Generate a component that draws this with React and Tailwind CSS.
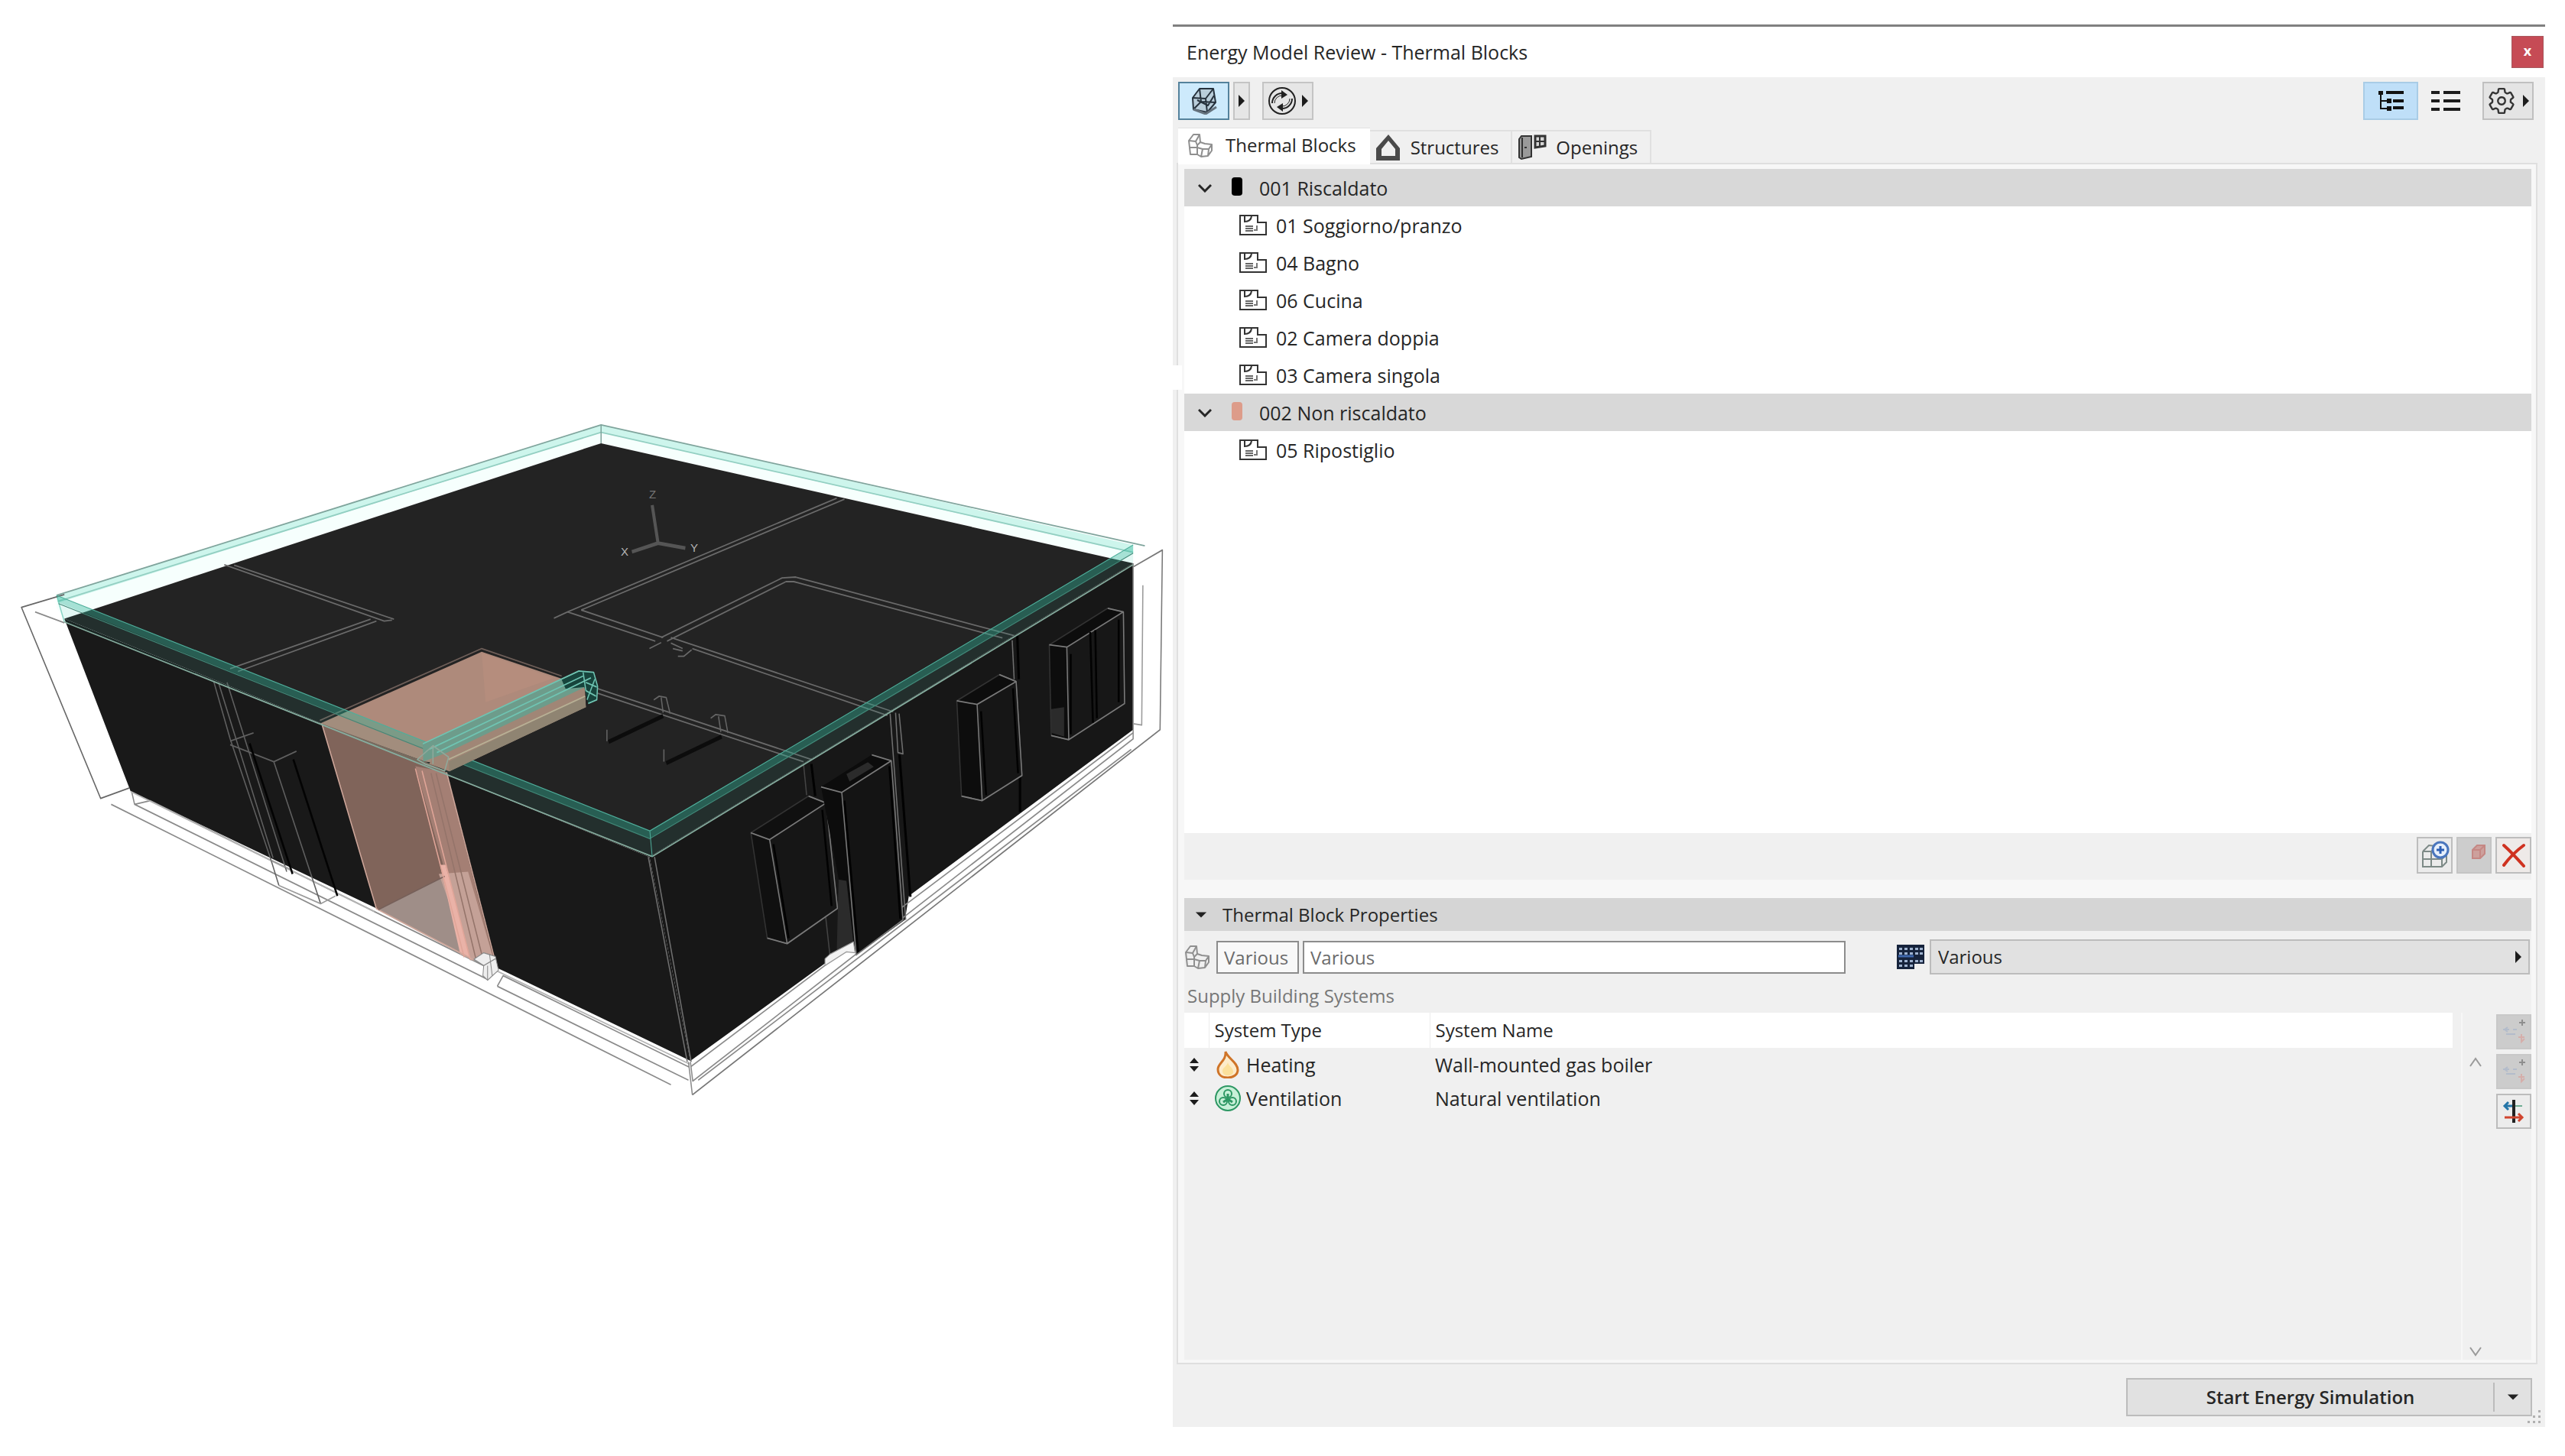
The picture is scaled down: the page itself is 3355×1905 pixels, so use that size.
import React, { useState } from 'react';
import { IoSettingsOutline } from 'react-icons/io5';

const blocks = [
  {
    id: '001',
    name: '001 Riscaldato',
    color: '#000000',
    zones: ['01 Soggiorno/pranzo', '04 Bagno', '06 Cucina', '02 Camera doppia', '03 Camera singola']
  },
  {
    id: '002',
    name: '002 Non riscaldato',
    color: '#dd9c8a',
    zones: ['05 Ripostiglio']
  }
];

const systems = [
  { type: 'Heating', name: 'Wall-mounted gas boiler' },
  { type: 'Ventilation', name: 'Natural ventilation' }
];

const ArrowRight = () => (
  <svg viewBox="0 0 10 18" className="w-[10px] h-[18px]" aria-hidden="true">
    <path d="M1 1 L9 9 L1 17Z" fill="#1c1c1c" />
  </svg>
);

const ArrowDown = () => (
  <svg viewBox="0 0 18 10" className="w-4 h-[10px]" aria-hidden="true">
    <path d="M1 1 H17 L9 9Z" fill="#222" />
  </svg>
);

const BlocksIcon = () => (
  <svg viewBox="0 0 34 34" className="w-[34px] h-[34px] shrink-0" fill="none" stroke="#8f8f8f" strokeWidth="2" strokeLinejoin="round" aria-hidden="true">
    <path d="M2 11 L8 3 H16 L17 13 L13 17 V29 L4 29 Z" />
    <path d="M2 11 L11 12 L16 3 M11 12 L13 17 M3 20 H13" />
    <path d="M17 13 L23 15 L32 16 V24 L27 31 L18 32 L13 29 M13 20 L20 22 H28 L32 16 M20 22 L18 32 M28 22 L27 31" />
  </svg>
);

const ModelIcon = () => (
  <svg viewBox="0 0 36 36" className="w-9 h-9" fill="none" stroke="#26313c" strokeWidth="2" strokeLinejoin="round" aria-hidden="true">
    <path d="M3 14 L12 2 H30 L33 20 L22 33 L4 29 Z" fill="#b9cdda" />
    <path d="M3 14 L20 15 L30 2 M20 15 L22 33 M12 2 L14 19 L4 29 M14 19 L33 20 M9 17 L23 24 L31 11" />
    <path d="M4 29 L20 35 L34 26" stroke="#65727d" strokeWidth="3" />
  </svg>
);

const RefreshIcon = () => (
  <svg viewBox="0 0 38 38" className="w-[38px] h-[38px]" fill="none" stroke="#222" strokeWidth="2" aria-hidden="true">
    <circle cx="19" cy="19" r="17" />
    <path d="M6 22 A13 13 0 0 1 20 9 M32 16 A13 13 0 0 1 18 29" />
    <path d="M9 22 A10 10 0 0 1 20 12 M29 16 A10 10 0 0 1 18 26" strokeWidth="1" />
    <path d="M18 5 L26 11 L18 16Z M20 22 L12 27 L20 33Z" fill="#222" stroke="none" />
  </svg>
);

const TreeIcon = () => (
  <svg viewBox="0 0 36 30" className="w-9 h-[30px]" aria-hidden="true">
    <path d="M5 4 V25 H15 M5 15 H15" fill="none" stroke="#111" strokeWidth="2" />
    <path d="M2 2 h6 v5 h-6z M12 2 h23 v4 h-23z M13 12 h6 v6 h-6z M21 13 h14 v4 h-14z M13 22 h6 v6 h-6z M21 22 h14 v4 h-14z" fill="#111" />
  </svg>
);

const ListIcon = () => (
  <svg viewBox="0 0 40 30" className="w-10 h-[30px]" aria-hidden="true">
    <path d="M1 2h11v4H1z M17 2h22v4H17z M1 13h11v4H1z M17 13h22v4H17z M1 24h11v4H1z M17 24h22v4H17z" fill="#1c1c1c" />
  </svg>
);

const HouseIcon = () => (
  <svg viewBox="0 0 34 36" className="w-[34px] h-9" aria-hidden="true">
    <path fillRule="evenodd" d="M17 1 L32 19 V35 H1 V19 Z M17 9 L8 20 V29 H26 V20 Z" fill="#4a4a4a" />
  </svg>
);

const OpeningsIcon = () => (
  <svg viewBox="0 0 38 34" className="w-[38px] h-[34px]" fill="none" stroke="#333" strokeWidth="2" aria-hidden="true">
    <path d="M2 6 L5 2 H18 V29 L5 32 L2 30Z" fill="#9a9a9a" />
    <path d="M6 4 V30 M9 17 H12" />
    <path d="M23 2 H36 V15 L23 17Z" fill="#d5d5d5" strokeWidth="3" />
    <path d="M29 2 V17 M23 9 H36" strokeWidth="2" />
  </svg>
);

const ZoneIcon = () => (
  <svg viewBox="0 0 38 28" className="w-[38px] h-7 shrink-0" fill="none" stroke="#333" strokeWidth="2" aria-hidden="true">
    <path d="M2 1 H25 V10 H36 V26 H2 Z" />
    <path d="M8 2 V9 Q16 9 17 2" />
    <path d="M24 14 V20 H20" stroke="#777" />
    <path d="M9 15 H19 M9 18 H19 M9 21 H19" stroke="#666" />
  </svg>
);

const SortIcon = () => (
  <svg viewBox="0 0 12 18" className="w-3 h-[18px]" aria-hidden="true">
    <path d="M0 7 L6 0 L12 7Z M0 11 L6 18 L12 11Z" fill="#1c1c1c" />
  </svg>
);

const FlameIcon = () => (
  <svg viewBox="0 0 32 36" className="w-8 h-9" fill="none" aria-hidden="true">
    <path d="M13 1 C16 10 29 15 29 25 C29 31 23 35 16 35 C8 35 3 31 3 24 C3 16 14 13 13 1Z" fill="#fdeccb" stroke="#cf7428" strokeWidth="3" />
    <path d="M16 15 C17 20 23 22 23 27 C23 31 20 32 16 32 C12 32 9 30 9 26 C9 22 15 20 16 15Z" fill="#fbe09b" />
  </svg>
);

const FanIcon = () => (
  <svg viewBox="0 0 36 36" className="w-9 h-9" fill="none" stroke="#2d9763" strokeWidth="2" aria-hidden="true">
    <circle cx="18" cy="18" r="16" fill="#c8f0d8" />
    <circle cx="18" cy="12" r="5" />
    <circle cx="12" cy="22" r="5" />
    <circle cx="24" cy="22" r="5" />
    <path d="M18 12 V19 L12 23 M18 19 L24 23" strokeWidth="3" />
  </svg>
);

const ProfileIcon = () => (
  <svg viewBox="0 0 36 32" className="w-9 h-8 shrink-0" aria-hidden="true">
    <path d="M0 0 H36 V25 H23 V32 H0Z" fill="#16233c" />
    <path d="M3 4h4v3H3z M10 4h4v3h-4z M17 4h4v3h-4z M24 4h4v3h-4z M30 4h4v3h-4z M3 10h4v3H3z M10 10h4v3h-4z M17 10h4v3h-4z M24 10h4v3h-4z M30 10h4v3h-4z M3 20h4v3H3z M10 20h4v3h-4z M17 20h4v3h-4z M24 20h4v3h-4z M30 20h4v3h-4z M3 26h4v3H3z M10 26h4v3h-4z M17 26h4v3h-4z" fill="#9fb3d0" />
    <path d="M2 15 H22" stroke="#3f68ad" strokeWidth="3" />
  </svg>
);

const AddBlockIcon = () => (
  <svg viewBox="0 0 38 38" className="w-[38px] h-[38px]" fill="none" stroke="#7d8a87" strokeWidth="2" aria-hidden="true">
    <path d="M3 14 L11 6 L20 7 M3 14 V34 H14 V14 H3 M3 24 H20 M14 14 L20 9 M14 34 H28 L34 28 V18 M14 24 H28 V34 M28 24 L34 18" />
    <circle cx="26" cy="12" r="10" fill="#e6effb" stroke="#4a76bd" strokeWidth="3" />
    <path d="M26 7 V17 M21 12 H31" stroke="#2d5fb4" strokeWidth="3" />
  </svg>
);

const RedBlockIcon = () => (
  <svg viewBox="0 0 20 20" className="w-5 h-5 ml-3 mb-2" fill="#cda09c" stroke="#c58884" strokeWidth="2" aria-hidden="true">
    <path d="M2 7 L8 1 H18 V12 L12 18 H2Z" />
    <path d="M2 7 H12 L18 1 M12 7 V18" fill="none" />
  </svg>
);

const DeleteIcon = () => (
  <svg viewBox="0 0 32 32" className="w-8 h-8" fill="none" aria-hidden="true">
    <path d="M3 3 Q14 13 29 30 M29 3 Q14 14 3 29" stroke="#cf3220" strokeWidth="4" strokeLinecap="round" />
  </svg>
);

const SystemFadedIcon = () => (
  <svg viewBox="0 0 36 36" className="w-9 h-9" fill="none" strokeWidth="2" aria-hidden="true">
    <path d="M29 2 V10 M25 6 H33" stroke="#8e8e8e" />
    <path d="M4 15 H12 M17 15 H22 M6 15 l4 -3 M6 15 l4 3 M8 21 H20" stroke="#b3bccb" />
    <path d="M24 25 H32 M28 21 V31 l4 -4" stroke="#d5aeaa" />
  </svg>
);

const SystemIcon = () => (
  <svg viewBox="0 0 36 36" className="w-9 h-9" fill="none" aria-hidden="true">
    <path d="M16 3 H20 V33 H16Z" fill="#222" />
    <path d="M6 11 H16 M11 6 L6 11 L11 16" stroke="#2676a8" strokeWidth="3" />
    <path d="M20 11 H29" stroke="#6fae93" strokeWidth="2" />
    <path d="M6 26 H28 M24 21 L29 26 L24 31" stroke="#d0452f" strokeWidth="3" />
  </svg>
);

// Perspective view of the thermal blocks with the slab outline above them
const ModelView = () => (
  <svg viewBox="0 0 1534 1905" className="w-full h-auto block" role="img" aria-label="3D view of the thermal blocks">
    <g transform="translate(0 520) scale(0.5102 0.5995)" fill="none" strokeLinejoin="round">
      {/* back of the slab */}
      <path d="M145 432 L1541 60 L2905 322 V362 L1541 100 L165 483 L145 460Z" fill="#f6fffd" />
      <path d="M145 432 L1541 60 L2905 322 V340 L1541 76 L150 448Z" fill="#cdf5ec" />
      <g stroke="#93cfc2" strokeWidth="3">
        <path d="M145 432 L1541 60 L2935 324" stroke="#7fa49c" />
        <path d="M148 445 L1541 76 L2905 338" />
        <path d="M1541 60 V100" stroke="#7fa49c" />
        <path d="M145 432 L165 490" stroke="#8fd8c8" />
      </g>

      {/* roof and walls */}
      <path d="M165 483 L1541 100 L2905 362 L1665 1003Z" fill="#232323" />
      <path d="M165 483 L1665 1003 L1770 1448 L1275 1245 L958 1112 L335 860Z" fill="#191919" />
      <path d="M1665 1003 L2905 362 V725 L2330 1088 L2320 1140 L2195 1217 L2188 1190 L2115 1235 L1770 1448Z" fill="#171717" />

      {/* wireframe around the base */}
      <g stroke="#8a8a8a" strokeWidth="3">
        <path d="M165 430 L55 458 L258 875 L332 852" stroke="#666" />
        <path d="M90 468 L165 492 M285 888 L1000 1192 L1720 1500" />
        <path d="M338 862 L345 888 L1250 1270 M345 888 L385 880 L1240 1240 M1275 1285 L1765 1490" />
        <path d="M335 860 L960 1122 M1275 1252 L1768 1455" stroke="#b5b5b5" />
        <path d="M1275 1285 L1290 1262 L1768 1462 M1765 1450 L1775 1522" />
        <path d="M1775 1522 L2974 725 L2980 333 L2905 370" stroke="#777" />
        <path d="M1770 1450 L1776 1492 L2905 745 V725 M1790 1490 L2900 768" />
        <path d="M1772 1460 L2905 732 M2905 362 V725" />
        <path d="M2930 410 L2927 715 L2905 712" stroke="#999" />
      </g>

      {/* partitions drawn on the roof */}
      <g stroke="#6a6a6a" strokeWidth="3">
        <path d="M575 365 L985 488 L1005 486 M600 366 L1010 484 M950 484 L590 592 M965 488 L610 598" />
        <path d="M2145 220 L1455 468 L1420 482 M2165 222 L1490 464" />
        <path d="M1490 464 L1700 524 M1455 468 L1680 532 M1720 524 L2290 686 M1720 536 L1750 548 M1775 548 L2275 694" />
        <path d="M1695 524 L2005 394 L2040 392 L2600 520 M1710 532 L2015 402 H2035 L2570 525 M1665 548 L1695 535" />
        <path d="M1725 548 l25 5 M1738 565 h15 l20 -14" />
        <path d="M1530 635 L2080 790 M1530 645 L2060 795" />
      </g>
      <g stroke="#666" strokeWidth="3">
        <path d="M1676 660 L1690 652 L1708 655 L1718 690 M1695 655 L1700 688" />
        <path d="M1822 700 L1835 692 L1858 695 L1866 732 M1842 696 L1848 730" />
        <path d="M1556 725 V750 M1702 768 V795" />
      </g>
      <g stroke="#0c0c0c" strokeWidth="9">
        <path d="M1560 752 L1700 695 M1708 798 L1850 740" />
      </g>
      <path d="M1672 235 L1687 318 M1687 318 L1620 337 M1687 318 L1757 329" stroke="#555" strokeWidth="8" />

      {/* left wall door */}
      <g stroke="#606060" strokeWidth="3">
        <path d="M548 620 L590 745 L695 1010 L715 1065 M560 622 L700 1005 M582 622 L735 1035" />
        <path d="M590 750 L650 732 M590 758 L702 795 L760 772 M702 795 L822 1105" />
        <path d="M715 1065 L822 1105 L860 1088 M695 1010 L745 1030" stroke="#9a9a9a" />
      </g>
      <path d="M752 790 L865 1088 M640 755 L750 1040" stroke="#030303" strokeWidth="5" />

      {/* corner and right wall joints */}
      <g stroke="#6f6f6f" strokeWidth="3">
        <path d="M1662 1003 L1762 1450 M1678 1003 L1772 1450" />
        <path d="M2282 690 L2322 1140 M2296 688 L2302 775 L2315 778 L2305 690" />
        <path d="M2060 800 L2068 868 M2115 1120 L2128 1220" stroke="#444" />
        <path d="M2595 530 L2600 615" />
      </g>
      <path d="M2608 520 L2612 615 M2615 800 V905 M2080 800 L2090 870 M2306 780 L2334 1090" stroke="#020202" strokeWidth="6" />

      {/* windows */}
      <g stroke="#7a7a7a" strokeWidth="3">
        <path d="M1925 950 L2073 870 L2118 885 L2147 1115 L2018 1192 L1967 1180Z" fill="#101010" stroke="#333" />
        <path d="M1973 965 L2118 885 L2147 1115 L2018 1192Z M1925 950 L1973 965 M2018 1192 L1967 1180 M2073 870 L2118 885" fill="#161616" />
        <path d="M2105 850 L2235 780 L2285 793 L2158 862 L2195 1217 L2188 1190 L2150 1050Z" fill="#0c0c0c" stroke="none" />
        <path d="M2170 822 L2225 796 L2240 806 L2178 838Z" fill="#2b2b2b" stroke="none" />
        <path d="M2158 862 L2285 793 L2315 1140 L2195 1217Z" fill="#141414" />
        <path d="M2105 850 L2158 862 M2235 780 L2285 793" />
        <path d="M2453 662 L2562 605 L2605 620 L2620 825 L2518 880 L2465 870Z" fill="#0d0d0d" stroke="#333" />
        <path d="M2505 670 L2605 620 L2620 825 L2518 880Z M2453 662 L2505 670 M2518 880 L2465 870 M2562 605 L2605 620" fill="#161616" />
        <path d="M2690 540 L2840 460 L2880 468 L2883 668 L2740 747 L2695 738Z" fill="#0d0d0d" stroke="#333" />
        <path d="M2695 680 L2728 676 V740 L2695 732Z" fill="#2b2b2b" stroke="none" />
        <path d="M2735 545 L2880 468 L2883 668 L2740 747Z M2690 540 L2735 545 M2740 747 L2695 738 M2840 460 L2880 468" fill="#171717" />
      </g>
      <path d="M2795 512 L2802 710 M2808 508 L2812 700 M1983 975 L2022 1180 M2108 900 L2132 1110 M2745 560 V735 M2868 485 V665 M2515 685 L2528 868 M2597 635 L2610 820 M2165 880 L2200 1210 M2280 805 L2308 1138" stroke="#020202" strokeWidth="5" />
      <path d="M2150 1052 L2170 1055 L2188 1190 L2145 1215Z" fill="#2b2b2b" />
      <path d="M2115 1225 L2128 1215 L2188 1188 L2192 1212 L2170 1210 L2115 1240Z" fill="#f2f2f2" stroke="#999" strokeWidth="2" />

      {/* unheated block */}
      <path d="M820 712 L1235 555 L1440 614 L1500 640 L1140 800 L1090 795Z" fill="#ae8a7b" />
      <path d="M1235 558 L1245 665 L1420 612Z" fill="#b58d7d" />
      <path d="M825 712 L1090 795 L1140 815 L1268 1228 L1215 1228 L965 1116Z" fill="#80645a" />
      <path d="M970 1118 L1140 1045 L1215 1228Z" fill="#9f8e88" />
      <path d="M1065 805 L1145 818 L1265 1225 L1205 1228Z" fill="#a47f74" />
      <path d="M1125 1040 L1200 1035 L1265 1225 L1205 1228Z" fill="#c4a197" />
      <path d="M1128 1020 L1142 1020 L1206 1225 L1180 1215Z" fill="#eab2a7" />
      <path d="M820 705 L1235 548 L1440 608" stroke="#6f5f59" strokeWidth="3" />
      <path d="M825 712 L965 1116 L1215 1228" stroke="#cfa79b" strokeWidth="3" />
      <path d="M970 1118 L1140 1045" stroke="#76605a" strokeWidth="3" />
      <path d="M1065 810 L1190 1222 M1082 815 L1205 1225" stroke="#e0a598" strokeWidth="3" />
      <path d="M1105 820 L1220 1225 M1118 820 L1238 1225" stroke="#94746a" strokeWidth="3" />
      <path d="M1145 818 L1268 1225" stroke="#cfa79b" strokeWidth="3" />
      <path d="M1215 1226 L1240 1212 L1270 1220 L1278 1250 L1250 1272 L1238 1262 L1240 1240Z" fill="#eeeeee" stroke="#888" strokeWidth="2" />
      <path d="M1240 1240 L1270 1225 M1250 1272 V1240 M1255 1215 L1262 1262" stroke="#888" strokeWidth="2" />

      {/* front of the slab */}
      <path d="M145 432 L1666 946 L2905 322 L2905 362 L1672 1002 L165 490Z" fill="#2ab097" fillOpacity="0.09" />
      <path d="M145 432 L1666 946 L2905 322 L2905 340 L1666 963 L150 448Z" fill="#35b79b" fillOpacity="0.35" />
      <g stroke="#4fae9b" strokeWidth="2">
        <path d="M145 432 L1666 946 L2905 322" />
        <path d="M150 450 L1666 963 L2905 340" stroke="#418878" />
        <path d="M165 490 L1672 1002 L2905 365" stroke="#86ad9f" strokeWidth="3" />
        <path d="M1666 946 L1672 1002" />
      </g>

      {/* beam over the unheated block */}
      <path d="M1110 785 L1499 629 L1502 676 L1152 816 L1100 800Z" fill="#a08676" />
      <path d="M1150 795 L1500 652 L1502 676 L1152 816Z" fill="#8f8472" />
      <path d="M1084 756 L1484 597 L1522 600 L1530 622 L1500 632 L1147 775 L1085 795Z" fill="#6d9c8b" />
      <path d="M1440 616 L1490 596 L1522 600 L1532 630 L1530 660 L1508 668 L1498 632 L1450 636Z" fill="#17443c" />
      <g stroke="#6fc4b2" strokeWidth="3">
        <path d="M1084 756 L1484 597 L1522 600 L1532 630 L1530 660 L1508 668" />
        <path d="M1100 768 L1495 608 M1120 775 L1515 612" />
        <path d="M1150 790 L1500 652" stroke="#b7b095" />
        <path d="M1495 600 L1502 640 L1528 652 M1502 622 L1530 632 M1505 660 L1525 615" />
        <path d="M1070 790 L1110 760 L1150 785 L1140 815 L1090 800Z M1110 760 V800" stroke="#8fa99b" />
      </g>
    </g>
    <g fill="#b5b5b5" fontSize="15" fontFamily="Liberation Sans, sans-serif">
      <text x="812" y="727">X</text>
      <text x="903" y="722">Y</text>
      <text x="849" y="652" fill="#777">Z</text>
    </g>
  </svg>
);

const IconButton = ({ label, className, children, ...rest }) => (
  <button
    type="button"
    aria-label={label}
    className={'flex items-center justify-center shrink-0 border-2 ' + className}
    {...rest}
  >
    {children}
  </button>
);

const App = () => {
  const [tab, setTab] = useState('blocks'); // 'blocks', 'structures' or 'openings'
  const [open, setOpen] = useState({ '001': true, '002': true });

  const tabs = [
    { id: 'blocks', label: 'Thermal Blocks', icon: <BlocksIcon /> },
    { id: 'structures', label: 'Structures', icon: <HouseIcon /> },
    { id: 'openings', label: 'Openings', icon: <OpeningsIcon /> }
  ];

  return (
    <div className="grid grid-cols-[1534fr_1795fr] items-stretch min-h-screen bg-white pr-[26px] font-['Open_Sans','Noto_Sans',sans-serif] text-[24px] leading-8 font-medium text-[#262626]">
      <main className="min-w-0">
        <ModelView />
      </main>

      <section className="relative min-w-0 flex flex-col mt-8 mb-[38px] border-t-3 border-[#808080] bg-[#f0f0f0]">
        <header className="flex items-center justify-between h-[66px] pl-[18px] pr-[2px] bg-white">
          <h1 className="text-[25px]">Energy Model Review - Thermal Blocks</h1>
          <button type="button" aria-label="Close" className="w-[42px] h-[42px] pb-1 bg-[#c64b55] border border-[#a8575c] text-white text-[18px] leading-6 font-bold">x</button>
        </header>

        <div className="flex items-center px-[7px] pt-[6px] pb-[10px]">
          <IconButton label="Show model" className="w-[67px] h-[50px] bg-[#cdeafc] border-[#54829c]"><ModelIcon /></IconButton>
          <IconButton label="Model options" className="w-[22px] h-[50px] ml-[5px] bg-[#e6e6e6] border-[#c4c4c4]"><ArrowRight /></IconButton>
          <IconButton label="Update" className="w-[67px] h-[50px] ml-4 gap-[6px] bg-[#e6e6e6] border-[#c4c4c4]"><RefreshIcon /><ArrowRight /></IconButton>
          <IconButton label="Tree view" className="w-[72px] h-[50px] ml-auto bg-[#bfdff8] border-[#a9cce6]"><TreeIcon /></IconButton>
          <IconButton label="List view" className="w-[72px] h-[50px] border-transparent"><ListIcon /></IconButton>
          <IconButton label="Settings" className="w-[67px] h-[50px] ml-3 mr-2 gap-2 bg-[#e4e4e4] border-[#c0c0c0]">
            <IoSettingsOutline className="w-[38px] h-[38px] shrink-0 text-[#333]" />
            <ArrowRight />
          </IconButton>
        </div>

        <div role="tablist" className="flex items-end h-[46px] px-[7px]">
          {tabs.map(t => (
            <button
              key={t.id}
              type="button"
              role="tab"
              aria-selected={tab === t.id}
              onClick={() => setTab(t.id)}
              className={tab === t.id
                ? 'relative z-10 flex items-center gap-4 h-12 -mb-[2px] pl-3 pr-[18px] pb-1 bg-white border-t border-[#e2e2e2]'
                : 'flex items-center gap-3 h-[43px] px-[7px] pr-4 border-t-2 border-r-2 border-[#e0e0e0]'}
            >
              {t.icon}
              <span>{t.label}</span>
            </button>
          ))}
        </div>

        <div className="flex-1 flex flex-col ml-[5px] mr-[10px] border-2 border-[#dfdfdf] bg-[#f7f7f7] pl-2 pr-[6px] pt-[6px] pb-1">
          <ul className="min-h-[869px] bg-white text-[25px]">
            {blocks.map(block => (
              <li key={block.id}>
                <button
                  type="button"
                  aria-expanded={open[block.id]}
                  onClick={() => setOpen({ ...open, [block.id]: !open[block.id] })}
                  className="flex items-center w-full h-[49px] pl-[18px] bg-[#d8d8d8] text-left"
                >
                  <svg viewBox="0 0 18 12" className="w-[18px] h-3" fill="none" stroke="#262626" strokeWidth="3" aria-hidden="true">
                    <path d="M1 2 L9 10 L17 2" />
                  </svg>
                  <span className="w-[14px] h-6 ml-[26px] mb-1 rounded-[4px]" style={{ background: block.color }} />
                  <span className="ml-[22px]">{block.name}</span>
                </button>
                {open[block.id] && (
                  <ul>
                    {block.zones.map(zone => (
                      <li key={zone} className="flex items-center h-[49px] pl-[71px] gap-[11px]">
                        <ZoneIcon />
                        <span>{zone}</span>
                      </li>
                    ))}
                  </ul>
                )}
              </li>
            ))}
          </ul>

          <div className="flex justify-end items-start gap-[5px] h-[61px] pt-[5px] bg-[#f0f0f0]">
            <IconButton label="Add thermal block" className="w-[47px] h-12 bg-[#ebebeb] border-[#bdbdbd]"><AddBlockIcon /></IconButton>
            <IconButton label="Remove zone" className="w-[46px] h-12 bg-[#cdcdcd] border-[#c4c4c4]" disabled><RedBlockIcon /></IconButton>
            <IconButton label="Delete thermal block" className="w-[47px] h-12 bg-[#eeeae8] border-[#bdbdbd]"><DeleteIcon /></IconButton>
          </div>

          <h2 className="mt-6">
            <button type="button" className="flex items-center gap-5 w-full h-[43px] pl-[14px] bg-[#d5d5d5] text-left">
              <ArrowDown />
              <span>Thermal Block Properties</span>
            </button>
          </h2>

          <div className="flex-1 flex flex-col bg-[#f0f0f0]">
            <div className="flex items-center h-[46px] mt-[11px]">
              <BlocksIcon />
              <input aria-label="Block ID" defaultValue="Various" className="w-[108px] h-[43px] ml-2 pl-2 bg-[#f8f8f8] border-2 border-[#8c8c8c] text-[#6b6b6b]" />
              <input aria-label="Block name" defaultValue="Various" className="flex-1 min-w-0 h-[43px] ml-[5px] pl-2 bg-white border-2 border-[#8c8c8c] text-[#6b6b6b]" />
              <div className="flex items-center shrink-0 w-[47%] ml-[67px] mr-[2px] gap-[7px]">
                <ProfileIcon />
                <div className="relative flex-1">
                  <select aria-label="Operation profile" className="appearance-none w-full h-[46px] pl-[9px] bg-[#e1e1e1] border-2 border-[#bcbcbc]">
                    <option>Various</option>
                  </select>
                  <span className="absolute right-[10px] top-[14px] pointer-events-none"><ArrowRight /></span>
                </div>
              </div>
            </div>

            <h3 className="h-[50px] pt-3 pl-1 text-[#777]">Supply Building Systems</h3>

            <div className="flex-1 flex">
              <div className="flex-1">
                <table className="w-full table-fixed text-left">
                  <thead>
                    <tr className="h-[46px] bg-white">
                      <th className="w-8" aria-label="Order" />
                      <th className="w-[289px] pl-[7px] font-medium border-l border-[#ececec]">System Type</th>
                      <th className="pl-[7px] font-medium border-l border-[#ececec]">System Name</th>
                    </tr>
                  </thead>
                  <tbody className="text-[25px]">
                    {systems.map(system => (
                      <tr key={system.type} className="h-11">
                        <td className="pl-[7px]"><SortIcon /></td>
                        <td className="pl-[7px]">
                          <div className="flex items-center gap-[6px]">
                            <span className="w-9 flex justify-center">
                              {system.type === 'Heating' ? <FlameIcon /> : <FanIcon />}
                            </span>
                            {system.type}
                          </div>
                        </td>
                        <td className="pl-[7px]">{system.name}</td>
                      </tr>
                    ))}
                  </tbody>
                </table>
              </div>
              <div className="flex flex-col justify-between items-center w-[36px] ml-[11px] pt-[58px] pb-1 border-l-2 border-[#f7f7f7]">
                <svg viewBox="0 0 18 14" className="w-[18px] h-[14px]" fill="none" stroke="#9a9a9a" strokeWidth="2" aria-hidden="true">
                  <path d="M2 12 L9 2 L16 12" />
                </svg>
                <svg viewBox="0 0 18 14" className="w-[18px] h-[14px]" fill="none" stroke="#9a9a9a" strokeWidth="2" aria-hidden="true">
                  <path d="M2 2 L9 12 L16 2" />
                </svg>
              </div>
              <div className="flex flex-col gap-[6px] ml-[10px] pt-[2px]">
                <IconButton label="Add system" className="w-[46px] h-[46px] bg-[#cccccc] border-[#c8c8c8]" disabled><SystemFadedIcon /></IconButton>
                <IconButton label="Remove system" className="w-[46px] h-[46px] bg-[#cccccc] border-[#c8c8c8]" disabled><SystemFadedIcon /></IconButton>
                <IconButton label="Edit systems" className="w-[46px] h-[46px] bg-[#ececec] border-[#bcbcbc]"><SystemIcon /></IconButton>
              </div>
            </div>
          </div>
        </div>

        <footer className="flex justify-end pt-[18px] pb-[14px] pr-[17px]">
          <div className="flex w-[531px] h-[50px] border-2 border-[#bcbcbc] bg-[#e1e1e1]">
            <button type="button" className="flex-1 font-semibold">Start Energy Simulation</button>
            <button type="button" aria-label="Simulation options" className="w-[49px] my-1 flex items-center justify-center border-l-2 border-[#bcbcbc]"><ArrowDown /></button>
          </div>
        </footer>

        <svg viewBox="0 0 20 20" className="absolute right-[4px] bottom-[3px] w-5 h-5" fill="#b0b0b0" aria-hidden="true">
          <path d="M15 1h3v3h-3z M15 8h3v3h-3z M8 8h3v3h-3z M15 15h3v3h-3z M8 15h3v3h-3z M1 15h3v3h-3z" />
        </svg>
        <span className="absolute left-0 top-[443px] w-3 h-8 bg-white" />
      </section>
    </div>
  );
};

export default App;
